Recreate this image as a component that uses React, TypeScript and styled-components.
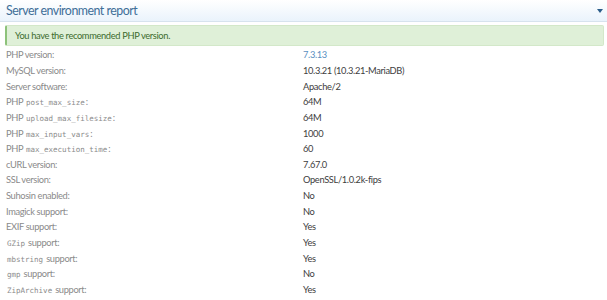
import React from "react";
import styled, { createGlobalStyle } from "styled-components";

const GlobalStyle = createGlobalStyle`
  html, body {
    margin: 0;
    padding: 0;
    background: #ffffff;
  }
  body {
    font-family: Lato, "Noto Sans", sans-serif;
  }
`;

const Block = styled.div`
  width: 607px;
  height: 300px;
  overflow: hidden;
  background: #fff;
`;

const Header = styled.div`
  height: 21px;
  display: flex;
  align-items: center;
  justify-content: space-between;
  padding: 0 4px 0 6px;
  background: linear-gradient(to bottom, #ffffff 0%, #eaf3fc 100%);
  border-bottom: 1px solid #d7e3ee;
`;

const Title = styled.h2`
  margin: 0;
  font-size: 12.4px;
  font-weight: 400;
  color: #3f6e98;
  letter-spacing: -0.5px;
`;

const Caret = styled.span`
  width: 0;
  height: 0;
  border-left: 3.5px solid transparent;
  border-right: 3.5px solid transparent;
  border-top: 4px solid #2b5d8a;
  margin-top: 1px;
`;

const Body = styled.div`
  padding: 3px 3px 0 5px;
`;

const Alert = styled.div`
  height: 19px;
  display: flex;
  align-items: center;
  padding-left: 8px;
  background: #dff0d8;
  border: 1px solid #d3e8c9;
  border-left: 2px solid #8dc27a;
  border-radius: 2px;
  font-size: 9.3px;
  letter-spacing: -0.35px;
  color: #3c6b2e;
`;

const Pairs = styled.dl`
  margin: 1px 0 0;
  display: grid;
  grid-template-columns: 298px 1fr;
  grid-auto-rows: 15.65px;
  align-items: center;
  font-size: 9.3px;
  letter-spacing: -0.35px;
`;

const Label = styled.dt`
  margin: 0;
  padding-left: 1px;
  color: #8a8a8a;
`;

const Value = styled.dd<{ $accent?: boolean }>`
  margin: 0;
  color: ${(p) => (p.$accent ? "#5a8fbf" : "#3d3d3d")};
`;

const Code = styled.code`
  font-family: "DejaVu Sans Mono", "Liberation Mono", monospace;
  font-size: 7.5px;
  letter-spacing: 0;
  margin: 0 1px;
  color: #8a8a8a;
`;

type Row = { label: React.ReactNode; value: string; accent?: boolean };

const rows: Row[] = [
  { label: "PHP version:", value: "7.3.13", accent: true },
  { label: "MySQL version:", value: "10.3.21 (10.3.21-MariaDB)" },
  { label: "Server software:", value: "Apache/2" },
  { label: <>PHP <Code>post_max_size</Code>:</>, value: "64M" },
  { label: <>PHP <Code>upload_max_filesize</Code>:</>, value: "64M" },
  { label: <>PHP <Code>max_input_vars</Code>:</>, value: "1000" },
  { label: <>PHP <Code>max_execution_time</Code>:</>, value: "60" },
  { label: "cURL version:", value: "7.67.0" },
  { label: "SSL version:", value: "OpenSSL/1.0.2k-fips" },
  { label: "Suhosin enabled:", value: "No" },
  { label: "Imagick support:", value: "No" },
  { label: "EXIF support:", value: "Yes" },
  { label: <><Code>GZip</Code> support:</>, value: "Yes" },
  { label: <><Code>mbstring</Code> support:</>, value: "Yes" },
  { label: <><Code>gmp</Code> support:</>, value: "No" },
  { label: <><Code>ZipArchive</Code> support:</>, value: "Yes" },
];

const App: React.FC = () => {
  return (
    <>
      <GlobalStyle />
      <Block>
        <Header>
          <Title>Server environment report</Title>
          <Caret />
        </Header>
        <Body>
          <Alert>You have the recommended PHP version.</Alert>
          <Pairs>
            {rows.map((r, i) => (
              <React.Fragment key={i}>
                <Label>{r.label}</Label>
                <Value $accent={r.accent}>{r.value}</Value>
              </React.Fragment>
            ))}
          </Pairs>
        </Body>
      </Block>
    </>
  );
};

export default App;
